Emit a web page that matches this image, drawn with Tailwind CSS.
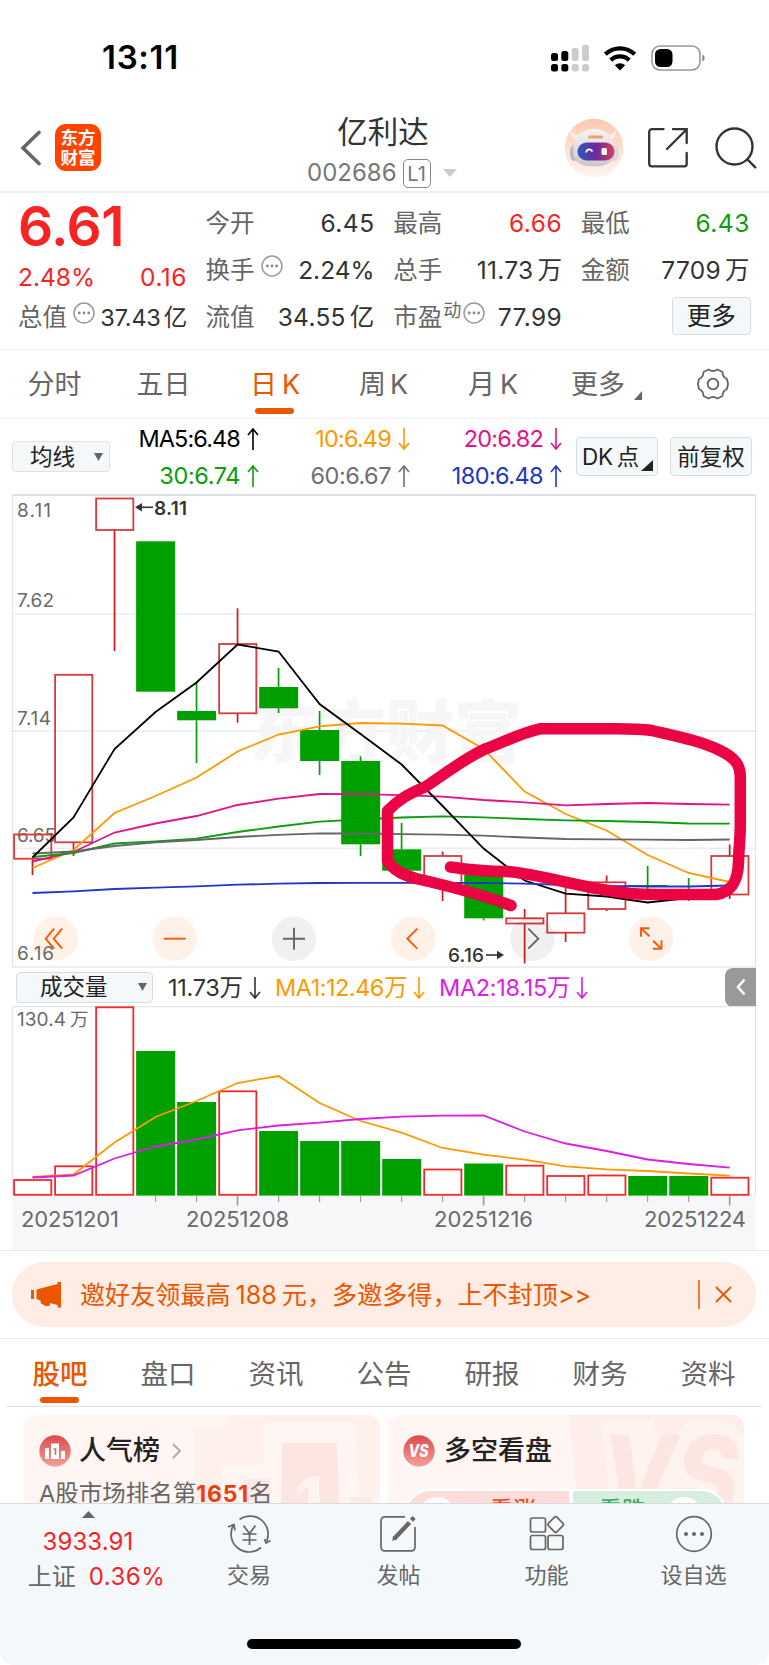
<!DOCTYPE html>
<html lang="zh-CN">
<head>
    <meta charset="UTF-8">
    <meta name="viewport" content="width=device-width, initial-scale=1.0">
    <title>亿利达 002686</title>
    <script src="https://cdn.jsdelivr.net/npm/@tailwindcss/browser@4"></script>
</head>
<body class="w-[769px] h-[1665px] overflow-hidden bg-white font-['Inter','Noto_Sans_CJK_SC',sans-serif] text-[#333] whitespace-nowrap">

    <!-- Shared icons -->
    <svg class="hidden">
        <symbol id="arrow-up" viewBox="0 0 12 24"><path d="M6 23V2M1 8l5-6 5 6" fill="none" stroke="currentColor" stroke-width="1.6"/></symbol>
        <symbol id="arrow-down" viewBox="0 0 12 24"><path d="M6 1v21M1 16l5 6 5-6" fill="none" stroke="currentColor" stroke-width="1.6"/></symbol>
        <symbol id="dots" viewBox="0 0 22 22"><circle cx="11" cy="11" r="10" fill="none" stroke="#999" stroke-width="1.5"/><g fill="#888"><circle cx="6.3" cy="11" r="1.4"/><circle cx="11" cy="11" r="1.4"/><circle cx="15.7" cy="11" r="1.4"/></g></symbol>
    </svg>

    <!-- Status bar -->
    <div class="h-[100px] flex items-start justify-between pt-[37px] pl-[102px] pr-[64px] text-black">
        <span class="text-[33px] leading-[41px] font-semibold tracking-[0.7px]">13:11</span>
        <div class="flex items-center h-[41px]">
            <svg class="w-[38px] h-[28px] mr-[14px]" viewBox="0 0 38 28">
                <g><rect x="0" y="9" width="7" height="8" rx="2.5"/><rect x="0" y="20" width="7" height="7.5" rx="2.5"/><rect x="10.3" y="7" width="7" height="10" rx="2.5"/><rect x="10.3" y="20" width="7" height="7.5" rx="2.5"/></g>
                <g fill="#ccc"><rect x="20.7" y="4" width="7" height="13" rx="2.5"/><rect x="20.7" y="20" width="7" height="7.5" rx="2.5"/><rect x="31" y="0.8" width="7" height="16.2" rx="2.5"/><rect x="31" y="20" width="7" height="7.5" rx="2.5"/></g>
            </svg>
            <svg class="w-[34px] h-[26px] mr-[14px]" viewBox="0 0 34 26">
                <g fill="none" stroke="#000" stroke-width="4.2"><path d="M2.3 9.3a21 21 0 0 1 29.4 0"/><path d="M7.8 15.2a13 13 0 0 1 18.4 0"/></g>
                <path d="M17 25.500l-5.200-5.200a7.600 7.600 0 0 1 10.400 0z"/>
            </svg>
            <svg class="w-[54px] h-[26px]" viewBox="0 0 54 26">
                <rect x="1" y="1" width="48" height="24" rx="8" fill="none" stroke="#999" stroke-width="1.6"/>
                <rect x="4" y="4" width="17.5" height="18" rx="5.5"/>
                <path d="M51.3 9.500c3 1.200 3 5.800 0 7z" fill="#888"/>
            </svg>
        </div>
    </div>

    <!-- Header -->
    <header class="h-[93px] border-b-2 border-[#eee] flex items-start pl-[20px] pr-[12px]">
        <div class="flex items-center pt-[24px] w-[273px]">
            <svg class="w-[21px] h-[36px] mr-[14px]" viewBox="0 0 21 36"><path d="M19 2.500L3 18l16 15.500" fill="none" stroke="#666" stroke-width="3.6" stroke-linecap="round"/></svg>
            <div class="w-[46px] h-[47px] rounded-[11px] bg-[#ff4400] text-white font-bold text-[17.5px] leading-[19.5px] text-center pt-[4px]">东方<br>财富</div>
        </div>
        <div class="w-[180px] pt-[11px] text-center">
            <div class="text-[30.5px] leading-[41px] text-[#333]">亿利达</div>
            <div class="flex items-center h-[42px] pl-[14px] text-[#777]">
                <span class="text-[24px] leading-[30px]">002686</span>
                <span class="ml-[6px] w-[28px] h-[29px] border border-[#888] rounded-[5px] text-[20px] leading-[28px]">L1</span>
                <svg class="w-[14px] h-[8px] ml-[12px]" viewBox="0 0 14 8"><path d="M0 0h14L7 8z" fill="#ccc"/></svg>
            </div>
        </div>
        <div class="flex items-center pt-[18px] ml-auto">
            <svg class="w-[60px] h-[60px] mr-[24px]" viewBox="0 0 60 60">
                <defs>
                    <linearGradient id="halo" x1="0" y1="0" x2="0" y2="1"><stop offset="0" stop-color="#ffc9ae"/><stop offset="1" stop-color="#fff4ef"/></linearGradient>
                    <linearGradient id="visor" x1="0" y1="0" x2="1" y2="0"><stop offset="0" stop-color="#3355bb"/><stop offset="0.5" stop-color="#6a2a9c"/><stop offset="1" stop-color="#d8405c"/></linearGradient>
                    <linearGradient id="helmet" x1="0" y1="0" x2="0" y2="1"><stop offset="0" stop-color="#f7f4f4"/><stop offset="1" stop-color="#c9c7cd"/></linearGradient>
                </defs>
                <circle cx="30" cy="30" r="29.2" fill="url(#halo)"/>
                <path d="M7 12c-1 7 3 9 6 10l5-5c-5 1-9-1-11-5zM52 12c1 7-3 9-6 10l-5-5c5 1 9-1 11-5z" fill="#fbeeea"/>
                <ellipse cx="10" cy="35" rx="4" ry="8" fill="#b9b6bd"/><ellipse cx="50" cy="35" rx="5" ry="8" fill="#dcd8dc"/>
                <path d="M30 11C16 11 9 21 9 34c0 10 8 14.500 21 14.500S51 44 51 34c0-13-7-23-21-23z" fill="url(#helmet)"/>
                <rect x="13.5" y="24.5" width="37" height="18" rx="9" fill="url(#visor)"/>
                <rect x="24" y="17.5" width="15" height="3" rx="1.5" fill="#eba36d"/>
                <path d="M22 34.500c1-4 5-4 6.500-1" fill="none" stroke="#fff" stroke-width="1.8"/>
                <rect x="37.5" y="30" width="5.5" height="7" rx="1.5" fill="#fff"/>
            </svg>
            <svg class="w-[40px] h-[40px] mr-[27px]" viewBox="0 0 40 40" fill="none" stroke="#333" stroke-width="2.3" stroke-linecap="round"><path d="M15.500 1.200H4a2.800 2.800 0 0 0-2.800 2.800V35.500A2.800 2.800 0 0 0 4 38.300h32.500a2.200 2.200 0 0 0 2.200-2.200V25M25 1.200h13.700V15M38 2L19 21"/></svg>
            <svg class="w-[42px] h-[42px]" viewBox="0 0 42 42" fill="none" stroke="#333" stroke-width="2.4" stroke-linecap="round"><circle cx="19.5" cy="19.5" r="18"/><path d="M32.500 32.500l7.800 7.800"/></svg>
        </div>
    </header>

    <!-- Quote summary -->
    <section class="h-[157px] border-b border-[#f0f0f0] pl-[18px] grid grid-cols-[169px_169px_169px_169px] gap-x-[18.6px] text-[24.5px]">
        <div class="text-[#f82424]">
            <div class="text-[55px] leading-[66px] font-semibold tracking-[-0.5px]">6.61</div>
            <div class="flex justify-between leading-[36px]"><span>2.48%</span><span class="tracking-[0.5px]">0.16</span></div>
            <div class="flex items-center h-[45px] text-[#666]">总值<svg class="w-[22px] h-[22px] ml-[6px] mb-[9px]"><use href="#dots"/></svg><span class="ml-auto text-[23.5px] text-[#333] tracking-[-0.2px]">37.43<span class="ml-[3px]">亿</span></span></div>
        </div>
        <div class="pt-[7px] text-[#666]">
            <div class="flex items-center justify-between h-[47px]">今开<span class="text-[#333] tracking-[0.5px]">6.45</span></div>
            <div class="flex items-center h-[47px]">换手<svg class="w-[22px] h-[22px] ml-[6px] mb-[9px]"><use href="#dots"/></svg><span class="ml-auto text-[#333]">2.24%</span></div>
            <div class="flex items-center justify-between h-[47px]">流值<span class="text-[#333] tracking-[0.3px]">34.55<span class="ml-[4px]">亿</span></span></div>
        </div>
        <div class="pt-[7px] text-[#666]">
            <div class="flex items-center justify-between h-[47px]">最高<span class="text-[#f82424] tracking-[0.5px]">6.66</span></div>
            <div class="flex items-center justify-between h-[47px]">总手<span class="text-[#333] tracking-[0.3px]">11.73<span class="ml-[4px]">万</span></span></div>
            <div class="flex items-center h-[47px]">市盈<span class="text-[18px] mb-[14px] ml-[1px]">动</span><svg class="w-[22px] h-[22px] ml-[2px] mb-[9px]"><use href="#dots"/></svg><span class="ml-auto text-[#333] tracking-[0.4px]">77.99</span></div>
        </div>
        <div class="pt-[7px] text-[#666]">
            <div class="flex items-center justify-between h-[47px]">最低<span class="text-[#0a9e0a] tracking-[0.5px]">6.43</span></div>
            <div class="flex items-center justify-between h-[47px]">金额<span class="text-[#333] tracking-[0.3px]">7709<span class="ml-[4px]">万</span></span></div>
            <div class="flex items-center justify-end h-[47px]"><button class="w-[79px] h-[38px] mb-[4px] -mr-[1px] rounded-[4px] border border-[#d6dce2] bg-[#f5f8fa] text-[24.5px] leading-[36px] text-[#222]">更多</button></div>
        </div>
    </section>

    <!-- Period tabs -->
    <nav class="h-[69px] border-b-2 border-[#f6f6f6] grid grid-cols-[109px_109px_114px_103px_116px_98px_120px] text-[27px] leading-[69px] text-[#666] text-center">
        <span>分时</span>
        <span>五日</span>
        <span class="relative text-[#ee5500]">日<span class="ml-[5px]">K</span><span class="absolute left-[37px] bottom-[5px] w-[39px] h-[6px] rounded-full bg-[#ee5500]"></span></span>
        <span>周<span class="ml-[4px]">K</span></span>
        <span>月<span class="ml-[5px]">K</span></span>
        <span class="flex items-center pl-[20px]">更多<svg class="w-[8px] h-[9px] ml-[9px] mt-[22px] shrink-0" viewBox="0 0 8 9"><path d="M8 0v9H0z" fill="#666"/></svg></span>
        <span class="flex items-center justify-center">
            <svg class="w-[34px] h-[34px] ml-[7px] -mt-[1px]" viewBox="0 0 34 34" fill="none" stroke="#666" stroke-width="1.8" stroke-linejoin="round"><path d="M12.500 2.500Q17 5.500 21.500 2.500L26.500 5Q26.500 10 31 12L32 17L31 22Q26.500 24 26.500 29L21.500 31.500Q17 28.500 12.500 31.500L7.500 29Q7.500 24 3 22L2 17L3 12Q7.500 10 7.500 5Z"/><circle cx="17" cy="17" r="5.3"/></svg>
        </span>
    </nav>

    <!-- MA legend -->
    <div class="h-[75px] flex items-start pl-[12px] text-[#222]">
        <button class="mt-[22px] w-[98px] h-[31px] rounded-[4px] border border-[#dde2e7] bg-[#f5f8fa] flex items-center pl-[17px] text-[22.5px] leading-[28px]">均线<svg class="w-[9px] h-[8px] ml-auto mr-[6px]" viewBox="0 0 9 8"><path d="M0 0h9L4.500 8z" fill="#666"/></svg></button>
        <div class="grid grid-cols-[149px_151px_152px] text-[23.5px] leading-[37px] pt-[1px] tracking-[-0.8px]">
            <span class="flex items-center justify-end text-black tracking-[-0.9px]">MA5:6.48<svg class="w-[12px] h-[24px] ml-[7px]"><use href="#arrow-up"/></svg></span>
            <span class="flex items-center justify-end text-[#ff9900]">10:6.49<svg class="w-[12px] h-[24px] ml-[7px]"><use href="#arrow-down"/></svg></span>
            <span class="flex items-center justify-end text-[#e0138c]">20:6.82<svg class="w-[12px] h-[24px] ml-[7px]"><use href="#arrow-down"/></svg></span>
            <span class="flex items-center justify-end text-[#0a9e0a] tracking-[-0.4px]">30:6.74<svg class="w-[12px] h-[24px] ml-[7px]"><use href="#arrow-up"/></svg></span>
            <span class="flex items-center justify-end text-[#707070] tracking-[-0.5px]">60:6.67<svg class="w-[12px] h-[24px] ml-[7px]"><use href="#arrow-up"/></svg></span>
            <span class="flex items-center justify-end text-[#2038c0] tracking-[-0.6px]">180:6.48<svg class="w-[12px] h-[24px] ml-[7px]"><use href="#arrow-up"/></svg></span>
        </div>
        <button class="mt-[18px] ml-[14px] w-[82px] h-[39px] rounded-[4px] border border-[#d6dce2] bg-[#f5f8fa] flex items-center pl-[5px] text-[22.5px] tracking-[-0.3px]">DK<span class="ml-[4px]">点</span><svg class="w-[12px] h-[11px] ml-[2px] mt-[18px]" viewBox="0 0 12 11"><path d="M12 0v11H0z" fill="#222"/></svg></button>
        <button class="mt-[18px] ml-[12px] w-[82px] h-[39px] rounded-[4px] border border-[#d6dce2] bg-[#f5f8fa] text-[22.5px]">前复权</button>
    </div>

    <!-- Candlestick chart, drawn by the script below -->
    <svg id="k-chart" class="block w-[769px] h-[474px]" viewBox="0 494 769 474"></svg>

    <!-- Volume legend -->
    <div class="h-[38px] flex items-center pl-[16px] pr-[13px] text-[23.5px] tracking-[-0.3px] text-[#333]">
        <button class="w-[137px] h-[31px] rounded-[4px] border border-[#d6dce2] bg-[#f5f8fa] flex items-center pl-[23px] text-[22.5px] leading-[30px] tracking-normal text-[#222]">成交量<svg class="w-[9px] h-[8px] ml-auto mr-[5px]" viewBox="0 0 9 8"><path d="M0 0h9L4.500 8z" fill="#666"/></svg></button>
        <span class="ml-[15px] w-[107px] flex items-center pt-[2px]">11.73万<svg class="w-[12px] h-[24px] ml-[6px]"><use href="#arrow-down"/></svg></span>
        <span class="w-[164px] flex items-center pt-[2px] text-[#ff9900] tracking-[-0.5px]">MA1:12.46万<svg class="w-[12px] h-[24px] ml-[6px]"><use href="#arrow-down"/></svg></span>
        <span class="flex items-center pt-[2px] text-[#dd1ce6]">MA2:18.15万<svg class="w-[12px] h-[24px] ml-[6px]"><use href="#arrow-down"/></svg></span>
        <span class="ml-auto w-[31px] h-[39px] rounded-l-[8px] bg-[#999] flex items-center justify-center"><svg class="w-[10px] h-[18px]" viewBox="0 0 10 18"><path d="M8.500 1.500L2 9l6.500 7.500" fill="none" stroke="#fff" stroke-width="2.6"/></svg></span>
    </div>

    <!-- Volume chart, drawn by the script below -->
    <svg id="vol-chart" class="block w-[769px] h-[244px]" viewBox="0 1006 769 244"></svg>

    <!-- Invite banner -->
    <div class="h-[89px] border-y border-[#e6e7e9] px-[12px] pt-[11px]">
        <div class="h-[65px] w-[744px] rounded-full bg-[#fdede4] flex items-center pl-[19px] pr-[24px] text-[#ee5500]">
            <svg class="w-[30px] h-[26px] mr-[19px]" viewBox="0 0 30 26" fill="#ee5500"><path d="M0 8h3v9H0zM5.500 7.500L26.500 2V0H30v25.500h-3.500V23l-7.500-2-.5 3h-4l-4.500-2.500-.5-3L5.500 17z"/></svg>
            <span class="text-[25.1px] leading-[40px]">邀好友领最高<span class="mx-[5px]">188</span>元，多邀多得，上不封顶&gt;&gt;</span>
            <span class="ml-auto w-[2px] h-[29px] bg-[#f07a3a] mr-[15px]"></span>
            <svg class="w-[17px] h-[17px]" viewBox="0 0 17 17"><path d="M1 1l15 15M16 1L1 16" stroke="#ee5500" stroke-width="1.8"/></svg>
        </div>
    </div>

    <!-- Content tabs -->
    <nav class="ml-[6px] mr-[7px] h-[68px] border-b border-[#e2e2e2] grid grid-cols-7 text-[27.5px] leading-[70px] text-[#666] text-center">
        <span class="relative h-[67px] text-[#ee5500] font-medium">股吧<span class="absolute left-[34px] bottom-[3px] w-[39px] h-[6px] rounded-full bg-[#ee5500]"></span></span>
        <span>盘口</span>
        <span>资讯</span>
        <span>公告</span>
        <span>研报</span>
        <span>财务</span>
        <span>资料</span>
    </nav>

    <!-- Cards, cut off by the bottom bar -->
    <div class="h-[96px] overflow-hidden flex gap-[8px] pl-[24px] pt-[8px]">
        <div class="relative w-[356px] h-[120px] rounded-[12px] overflow-hidden bg-[#fff6f3]">
            <svg class="absolute inset-0 w-[356px] h-[120px]" viewBox="0 0 356 120">
                <path d="M170 12h35V0h151v120H170z" fill="#fff0ec"/>
                <path d="M198 50h42V7h90l6 75h20v38H198z" fill="#fff5f2"/>
                <path d="M258 28h55l3 92h-59z" fill="#fce4e1"/>
                <path d="M220 64h26v56h-26z" fill="#fce8e5"/><path d="M326 82h22v38h-22z" fill="#fdeae7"/>
                <text x="270" y="112" font-size="66" font-weight="800" fill="#fff3f0" transform="skewY(-8) translate(0 38)">1</text>
            </svg>
            <div class="relative flex items-center pt-[16px] pl-[15px] h-[56px]">
                <svg class="w-[32px] h-[32px]" viewBox="0 0 32 32">
                    <defs><linearGradient id="badge" x1="0" y1="0" x2="0" y2="1"><stop offset="0" stop-color="#dc4b49"/><stop offset="1" stop-color="#f2a09c"/></linearGradient></defs>
                    <circle cx="16" cy="16" r="15.7" fill="url(#badge)"/>
                    <path d="M6 13h4v11H6zM12 8.500h8V24h-8zM22 16h4v8h-4z" fill="#fff"/>
                    <path d="M14.500 14h2v6" fill="none" stroke="#dd6a66" stroke-width="1.6"/>
                </svg>
                <span class="ml-[8px] text-[27px] font-medium text-[#222]">人气榜</span>
                <svg class="w-[9px] h-[16px] ml-[12px]" viewBox="0 0 9 16"><path d="M1 1l7 7-7 7" fill="none" stroke="#aaa" stroke-width="1.8"/></svg>
            </div>
            <div class="relative pl-[15px] text-[23.5px] leading-[46px] text-[#666]">A股市场排名第<span class="font-bold text-[#e8400f] text-[23px] tracking-[0.8px]">1651</span>名</div>
        </div>
        <div class="relative w-[356px] h-[120px] rounded-[12px] overflow-hidden bg-[#fff6f3]">
            <svg class="absolute inset-0 w-[356px] h-[120px]" viewBox="0 0 356 120">
                <path d="M181 0h175v120H193z" fill="#fdeeeb"/>
                <path d="M213 5h52l10 30 25-28c30-6 48 0 56 14v99H226z" fill="#fff3f0"/>
                <text x="213" y="100" font-size="110" font-weight="800" font-style="italic" fill="#fde5e2" textLength="138" lengthAdjust="spacingAndGlyphs">VS</text>
            </svg>
            <div class="relative flex items-center pt-[16px] pl-[15px] h-[56px]">
                <svg class="w-[32px] h-[32px]" viewBox="0 0 32 32"><circle cx="16" cy="16" r="15.7" fill="url(#badge)"/><text x="15.5" y="22" font-size="17" font-weight="800" font-style="italic" fill="#fff" text-anchor="middle" textLength="20" lengthAdjust="spacingAndGlyphs">VS</text></svg>
                <span class="ml-[9px] text-[27px] font-medium text-[#222]">多空看盘</span>
            </div>
            <div class="relative mx-[17px] mt-[18px] h-[50px] rounded-full border-2 border-white overflow-hidden flex text-[23px] font-medium leading-[38px] bg-white">
                <span class="w-[162px] bg-[#fddcd9] text-[#ee5020] pl-[83px]">看涨</span>
                <span class="ml-[4px] flex-1 bg-[#d5eedd] text-[#3cae62] pl-[26px]">看跌</span>
                <span class="absolute left-[11px] top-[6px] w-[38px] h-[38px] rounded-full bg-white"></span>
                <span class="absolute right-[22px] top-[6px] w-[38px] h-[38px] rounded-full bg-white"></span>
            </div>
        </div>
    </div>

    <!-- Bottom bar -->
    <footer class="relative h-[162px] border-t border-[#d9dcdf] bg-[#f5f8fa] rounded-b-[14px] text-[#666]">
        <div class="grid grid-cols-[176px_146px_153px_143px_151px] text-center text-[22px]">
            <div class="text-[24px] leading-[35px] pt-[7px]">
                <svg class="w-[13px] h-[7px] mx-auto" viewBox="0 0 13 7"><path d="M6.500 0L13 7H0z" fill="#666"/></svg>
                <div class="mt-[6px] text-[#fb1f25] tracking-[0.1px]">3933.91</div>
                <div class="pl-[17px]">上证<span class="ml-[13px] text-[#fb1f25] tracking-[0.5px]">0.36%</span></div>
            </div>
            <div class="pt-[10px]">
                <svg class="w-[44px] h-[40px] mx-auto" viewBox="0 0 44 40" fill="none" stroke="#666" stroke-width="1.7"><path d="M12.500 5.500a18 18 0 0 1 27.200 21.500M34 33.500A18 18 0 0 1 6.800 10.500M1 13l6-2.500 1 6M43.500 26.500l-4.500 2.500-1.500-4"/><path d="M16.500 11.500l6 8 6-8M15.500 20h14M15.500 26h14M22.500 20v11"/></svg>
                <div class="leading-[36px] mt-[3px]">交易</div>
            </div>
            <div class="pt-[10px]">
                <svg class="w-[38px] h-[40px] mx-auto" viewBox="0 0 38 40" fill="none" stroke="#666" stroke-width="1.7"><path d="M25 2.800H4.500A3.500 3.500 0 0 0 1 6.300v27A3.500 3.500 0 0 0 4.500 36.800h27a3.500 3.500 0 0 0 3.500-3.500V13"/><path d="M14 25l15.500-16.500M31.500 6.200l2.600-2.700" stroke-width="4.4"/><path d="M12 27l1.500-5 3 3z" fill="#666" stroke="none"/></svg>
                <div class="leading-[36px] mt-[3px]">发帖</div>
            </div>
            <div class="pt-[10px]">
                <svg class="w-[36px] h-[40px] mx-auto" viewBox="0 0 36 40" fill="none" stroke="#666" stroke-width="1.7"><rect x="1.5" y="4" width="15" height="14" rx="2"/><rect x="1.5" y="21.5" width="15" height="14" rx="2"/><rect x="19" y="21.5" width="15" height="14" rx="2"/><rect x="20.7" y="4.5" width="12" height="12" rx="2" transform="rotate(45 26.7 10.5)"/></svg>
                <div class="leading-[36px] mt-[3px]">功能</div>
            </div>
            <div class="pt-[10px]">
                <svg class="w-[38px] h-[40px] mx-auto" viewBox="0 0 38 40"><circle cx="19" cy="20" r="17.3" fill="none" stroke="#666" stroke-width="1.7"/><g fill="#666"><circle cx="11" cy="20" r="2"/><circle cx="19" cy="20" r="2"/><circle cx="27" cy="20" r="2"/></g></svg>
                <div class="leading-[36px] mt-[3px]">设自选</div>
            </div>
        </div>
        <div class="absolute left-[247px] bottom-[16px] w-[274px] h-[10px] rounded-full bg-black"></div>
    </footer>

    <script>
        const X0 = 32.5, STEP = 41.01;
        const cx = i => X0 + STEP * i;

        // [up?, body top, body bottom, wick top, wick bottom]
        const candles = [
            [1, 834.5, 858.7, 834.5, 875], [1, 674.8, 842.3, 674.8, 856], [1, 498.5, 530, 498.5, 651],
            [0, 541.3, 691.7, 541.3, 691.7], [0, 711, 720.3, 682.7, 763], [1, 644, 713.3, 608.3, 722.7],
            [0, 687, 708.3, 668, 713], [0, 730, 761, 711, 775], [0, 761, 844.3, 756.3, 856],
            [0, 849.3, 870.7, 823, 870.7], [1, 856, 884, 851.5, 901], [0, 875, 918.3, 875, 920.5],
            [1, 918.3, 923.5, 909, 963.5], [1, 913.3, 932.7, 888, 942], [1, 882.3, 909, 875.5, 911],
            [0, 885, 886.4, 866, 890], [0, 893, 894.4, 878, 901], [1, 856, 894.5, 844.5, 899]
        ];
        const averages = {
            '#ff9900': [868, 850, 813, 796, 777.5, 751.5, 734.5, 726.3, 723, 723.6, 725.5, 749, 791.5, 814, 830.5, 855, 873, 882],
            '#e0138c': [861.5, 852, 832.5, 823.5, 816, 805, 798.7, 794, 794.2, 795.2, 796.7, 800, 802.3, 805.3, 804, 803, 804, 804.7],
            '#0a9e0a': [857, 853, 843.5, 841.3, 838.7, 832, 826.5, 821.7, 819.5, 817.5, 816.3, 817.3, 819, 820.3, 821, 822, 823.5, 823.7],
            '#666666': [853.5, 851.5, 846, 842.3, 840, 837, 834.8, 833.3, 833.5, 834.2, 834.7, 835.7, 837.5, 839, 839.3, 839.7, 840, 839.5],
            '#000000': [857.5, 817.5, 749, 712, 682.5, 644.5, 651.5, 704, 734, 764.5, 806, 848.5, 880.5, 893.7, 896.5, 902.5, 898, 890],
            '#2038c0': [893, 891.3, 889, 887.7, 886.3, 884.7, 883.7, 883, 882.8, 882.8, 882.8, 883, 883.7, 885, 886, 886.5, 886.5, 885.5]
        };
        const volumes = [
            [1, 1180], [1, 1166.3], [1, 1007.3], [0, 1051], [0, 1102], [1, 1091.3], [0, 1131], [0, 1141], [0, 1141],
            [0, 1159], [1, 1169.5], [0, 1163.5], [1, 1165.7], [1, 1176], [1, 1175.5], [0, 1176], [0, 1176], [1, 1177.7]
        ];
        const volumeAverages = {
            '#ff9900': [1177, 1174.5, 1142.5, 1117, 1101, 1083, 1076, 1103, 1121, 1132.7, 1148, 1154.7, 1159.7, 1166.3, 1169.3, 1171, 1173.5, 1175.7],
            '#dd1ce6': [1177.5, 1175.5, 1158.5, 1146.5, 1139.5, 1130.3, 1125.5, 1122.7, 1119, 1116.7, 1115.7, 1115.5, 1131.5, 1143.5, 1151, 1159.5, 1164, 1167.7]
        };

        const line = (x1, y1, x2, y2, color, w = 1.5) => `<line x1="${x1}" y1="${y1}" x2="${x2}" y2="${y2}" stroke="${color}" stroke-width="${w}"/>`;
        const poly = (ys, color) => `<polyline points="${ys.map((y, i) => cx(i) + ',' + y).join(' ')}" fill="none" stroke="${color}" stroke-width="1.8"/>`;
        const label = (x, y, text, w, size = 19, extra = 'fill="#6a6a6a"') => `<text x="${x}" y="${y}" font-size="${size}" textLength="${w}" ${extra}>${text}</text>`;
        const bar = (i, up, top, bottom, red) => up
            ? `<rect x="${cx(i) - 18.4}" y="${top}" width="37.2" height="${bottom - top}" fill="none" stroke="${red}" stroke-width="1.8"/>`
            : `<rect x="${cx(i) - 19.4}" y="${top}" width="39" height="${bottom - top}" fill="#00a000"/>`;

        // Price chart
        let k = `<rect x="12.5" y="495" width="743" height="472" fill="none" stroke="#e0e3e7" stroke-width="1.2"/>` + line(12, 495, 756, 495, '#d9dce0', 1.6);
        for (const y of [614, 731, 848.3]) k += line(13, y, 755, y, '#e9edf2', 1.6);
        k += `<text x="250" y="757" font-size="68" font-weight="900" fill="#f6f6f6">东方财富</text>`;
        k += label(17, 516.5, '8.11', 34) + label(17, 607, '7.62', 37) + label(17, 724.5, '7.14', 34) + label(17, 842.3, '6.65', 39);
        candles.forEach(([up, top, bottom, hi, lo], i) => {
            const c = up ? '#d3181c' : '#00a000';
            k += line(cx(i), hi, cx(i), top, c, 1.7) + line(cx(i), bottom, cx(i), lo, c, 1.7) + bar(i, up, top, bottom, '#d83a3e');
        });
        for (const [color, ys] of Object.entries(averages)) k += poly(ys, color);
        k += label(154, 514.5, '8.11', 33, 19, 'fill="#333" font-weight="600"') + line(139, 507.3, 153, 507.3, '#333', 1.6) + `<path d="M135 507.3l7-4.2v8.4z" fill="#333"/>`;
        k += label(448, 961.5, '6.16', 36, 19, 'fill="#333" font-weight="500"') + line(486, 955, 499, 955, '#333', 1.6) + `<path d="M504 955l-7-4.2v8.4z" fill="#333"/>`;

        // Round chart controls
        const controls = [
            [55.7, 1, 'M-1.500 -10L-10 0L-1.500 10M6.500 -10L-2 0L6.500 10'],
            [174.7, 1, 'M-11 0H11'],
            [294, 0, 'M-11 0H11M0 -11V11'],
            [413.3, 1, 'M4 -10L-6 0L4 10'],
            [532.3, 0, 'M-4 -10L6 0L-4 10'],
            [651, 1, 'M-10 -2V-10.500H-1.500M-10 -10.500L-1.500 -2.500M2 2L10.500 10M10.500 1.500V10H2']
        ];
        for (const [x, hot, d] of controls) {
            k += `<g transform="translate(${x} 938.7)"><circle r="22.3" fill="${hot ? '#ff6a1e' : '#000'}" fill-opacity="${hot ? 0.1 : 0.06}"/><path d="${d}" fill="none" stroke="${hot ? '#f35a0c' : '#666'}" stroke-width="1.9"/></g>`;
        }
        k += label(17, 960, '6.16', 37);

        // Freehand marker loop
        k += `<path d="M450.500 867C470 870 490 871.500 507 871.500C545 875 580 888 630 893.500C650 895 690 894.500 716 894.500C732 892 738 881 738.500 862C739 845 740.300 838 740.300 825V777C740.300 764 734 757 719 750C700 741 680 737 652 730.500C635 728 620 728.800 600 728.800H540C520 733 500 744 485 749C462 760 442 776 425 787C408 794 398 800 387.500 811V861C394 871 405 876 418 879C440 884 475 892 511 905.500" fill="none" stroke="#ea0443" stroke-width="11.5" stroke-linecap="round" stroke-linejoin="round"/>`;
        document.getElementById('k-chart').innerHTML = k;

        // Volume chart
        let v = `<rect x="12" y="1195.5" width="744" height="54" fill="#f7f7fa"/>` + `<path d="M12.500 1195V1006.500H755.500V1195" fill="none" stroke="#e4e6e9" stroke-width="1.3"/>`;
        v += label(17, 1025.5, '130.4', 49) + `<text x="70" y="1025.5" font-size="18.5" fill="#6a6a6a">万</text>`;
        volumes.forEach(([up, top], i) => {
            v += bar(i, up, top, up ? 1194.8 : 1195.6, '#f4282c');
            if (i > 2) v += line(cx(i), 1196, cx(i), (i - 5) % 6 ? 1202 : 1205.5, '#999', (i - 5) % 6 ? 1.1 : 1.6);
        });
        for (const [color, ys] of Object.entries(volumeAverages)) v += poly(ys, color);
        v += label(21, 1226.7, '20251201', 98, 22) + label(186, 1226.7, '20251208', 103, 22) + label(434, 1226.7, '20251216', 99, 22) + label(644, 1226.7, '20251224', 102, 22);
        document.getElementById('vol-chart').innerHTML = v;
    </script>
</body>
</html>
